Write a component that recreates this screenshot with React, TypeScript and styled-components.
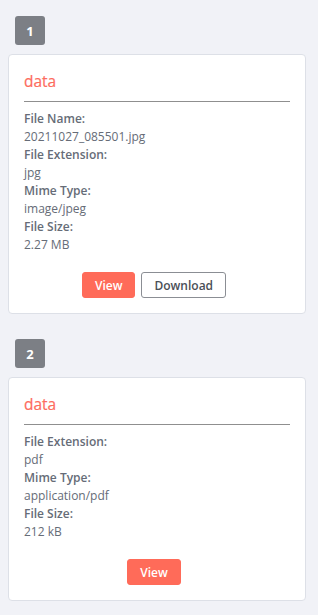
import React from "react";
import styled, { createGlobalStyle } from "styled-components";

const GlobalStyle = createGlobalStyle`
  html, body {
    margin: 0;
    padding: 0;
    background: #f1f2f7;
    font-family: "Open Sans", "Noto Sans", sans-serif;
  }
`;

type FileItem = {
  fields: { label: string; value: string }[];
  download?: boolean;
};

const files: FileItem[] = [
  {
    fields: [
      { label: "File Name:", value: "20211027_085501.jpg" },
      { label: "File Extension:", value: "jpg" },
      { label: "Mime Type:", value: "image/jpeg" },
      { label: "File Size:", value: "2.27 MB" },
    ],
    download: true,
  },
  {
    fields: [
      { label: "File Extension:", value: "pdf" },
      { label: "Mime Type:", value: "application/pdf" },
      { label: "File Size:", value: "212 kB" },
    ],
  },
];

function App() {
  return (
    <Page>
      <GlobalStyle />
      {files.map((file, i) => (
        <Section key={i}>
          <Badge>{i + 1}</Badge>
          <Card>
            <Title>data</Title>
            <Rule />
            <Fields>
              {file.fields.map((f) => (
                <React.Fragment key={f.label}>
                  <Label>{f.label}</Label>
                  <Value>{f.value}</Value>
                </React.Fragment>
              ))}
            </Fields>
            <Actions>
              <Button $primary>View</Button>
              {file.download && <Button>Download</Button>}
            </Actions>
          </Card>
        </Section>
      ))}
    </Page>
  );
}

export default App;

const Page = styled.div`
  padding: 16px 12px 15px 8px;
  display: flex;
  flex-direction: column;
  gap: 25px;
`;

const Section = styled.div`
  display: flex;
  flex-direction: column;
  align-items: flex-start;
  gap: 9px;
`;

const Badge = styled.div`
  margin-left: 7px;
  width: 30px;
  height: 29px;
  border-radius: 3px;
  background: #7c7f85;
  color: #fff;
  font-size: 13px;
  font-weight: 700;
  display: flex;
  align-items: center;
  justify-content: center;
`;

const Card = styled.div`
  align-self: stretch;
  background: #fff;
  border: 1px solid #dde0e7;
  border-radius: 4px;
  padding: 15px;
`;

const Title = styled.div`
  color: #fd6c5e;
  font-size: 15.5px;
  font-weight: 500;
  line-height: 22px;
  -webkit-text-stroke: 0.2px #fd6c5e;
`;

const Rule = styled.div`
  height: 1px;
  background: #8f8f8f;
  margin: 9px 0 8px;
`;

const Fields = styled.div`
  display: flex;
  flex-direction: column;
  color: #666c77;
  font-size: 12px;
  line-height: 18px;
`;

const Label = styled.div`
  font-weight: 600;
`;

const Value = styled.div`
  font-weight: 400;
`;

const Actions = styled.div`
  display: flex;
  justify-content: center;
  gap: 6px;
  margin-top: 18px;
  padding-right: 6px;
`;

const Button = styled.button<{ $primary?: boolean }>`
  height: 26px;
  padding: 0 12px;
  border-radius: 3px;
  font-family: inherit;
  font-size: 12px;
  font-weight: 600;
  border: 1px solid ${(p) => (p.$primary ? "#ff6b59" : "#8b8e94")};
  background: ${(p) => (p.$primary ? "#ff6b59" : "#fff")};
  color: ${(p) => (p.$primary ? "#fff" : "#4a4f57")};
`;
